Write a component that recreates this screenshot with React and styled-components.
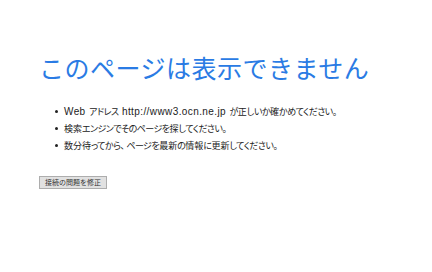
import styled, { createGlobalStyle } from "styled-components";

const GlobalStyle = createGlobalStyle`
    html, body {
        margin: 0;
        padding: 0;
        background: #ffffff;
    }
    body {
        font-family: "Noto Sans CJK JP", "Liberation Sans", sans-serif;
    }
`

const tips = [
    'Web アドレス http://www3.ocn.ne.jp が正しいか確かめてください。',
    '検索エンジンでそのページを探してください。',
    '数分待ってから、ページを最新の情報に更新してください。',
]

// split a line into kana / punctuation / latin / kanji runs so the kana can be set narrower
function splitRuns(text) {
    const re = /([\u3040-\u30ff]+)|([\u3000-\u303f]+)|([A-Za-z0-9:/.]+)/g
    const runs = []
    let last = 0
    let m
    while ((m = re.exec(text)) !== null) {
        if (m.index > last) runs.push({ kind: 'plain', text: text.slice(last, m.index) })
        runs.push({ kind: m[1] ? 'kana' : m[2] ? 'punct' : 'latin', text: m[0] })
        last = m.index + m[0].length
    }
    if (last < text.length) runs.push({ kind: 'plain', text: text.slice(last) })
    return runs
}

export default function App() {
    return (
        <Page>
            <GlobalStyle />
            <Title>このページは表示できません</Title>
            <TipList>
                {tips.map((tip) => (
                    <Tip key={tip}>
                        <Dot />
                        <TipText>
                            {splitRuns(tip).map((run, i) => {
                                if (run.kind === 'kana') return <Kana key={i}>{run.text}</Kana>
                                if (run.kind === 'punct') return <Punct key={i}>{run.text}</Punct>
                                if (run.kind === 'latin') return <Latin key={i}>{run.text}</Latin>
                                return <Plain key={i}>{run.text}</Plain>
                            })}
                        </TipText>
                    </Tip>
                ))}
            </TipList>
            <FixButton type="button">接続の問題を修正</FixButton>
        </Page>
    )
}

const Page = styled.div`
    padding: 47px 0 0 39px;
    display: flex;
    flex-direction: column;
    align-items: flex-start;
`
const Title = styled.h1`
    margin: 0;
    font-family: "Noto Sans CJK JP", sans-serif;
    font-size: 25px;
    font-weight: 400;
    line-height: 40px;
    color: #2a7be4;
    letter-spacing: 0.5px;
`
const TipList = styled.ul`
    margin: 16px 0 0 0;
    padding: 0 0 0 16px;
    list-style: none;
`
const Tip = styled.li`
    display: flex;
    align-items: center;
    height: 17px;
`
const Dot = styled.span`
    width: 3px;
    height: 3px;
    border-radius: 50%;
    background: #222222;
    margin-right: 6px;
    flex: none;
`
const TipText = styled.span`
    font-family: "Noto Sans CJK JP", sans-serif;
    font-feature-settings: "palt";
    font-size: 9px;
    line-height: 17px;
    color: #222222;
    white-space: pre;
`
const Plain = styled.span`
    letter-spacing: 0;
    word-spacing: 1.5px;
`
const Kana = styled.span`
    letter-spacing: -0.55px;
`
const Punct = styled.span`
    letter-spacing: 1.5px;
`
const Latin = styled.span`
    font-family: "Liberation Sans", sans-serif;
    font-size: 10px;
    letter-spacing: 0.4px;
`
const FixButton = styled.button`
    margin-top: 22px;
    height: 13px;
    padding: 0 5px;
    font-family: "Noto Sans CJK JP", sans-serif;
    font-size: 7px;
    line-height: 11px;
    color: #333333;
    background: #e1e1e1;
    border: 1px solid #adadad;
    border-radius: 0;
`
